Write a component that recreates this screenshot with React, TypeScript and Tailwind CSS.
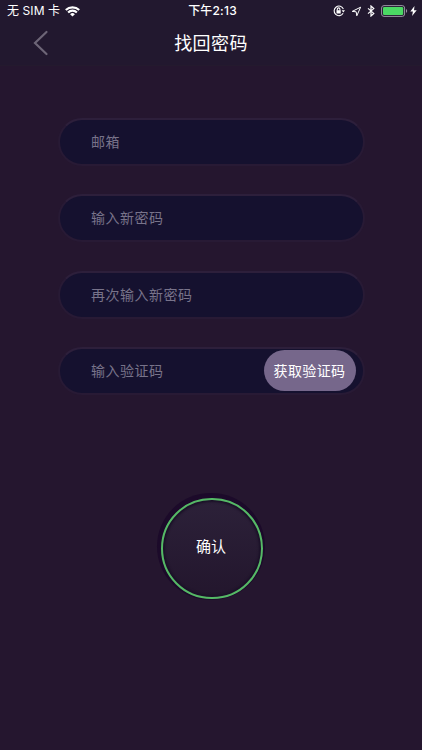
import React from "react";

const fields = ["邮箱", "输入新密码", "再次输入新密码", "输入验证码"];

function StatusBar() {
  return (
    <div className="grid h-[22px] grid-cols-[1fr_auto_1fr] items-center pl-[7px] pr-[5px] text-[12px] leading-[22px]">
      <div className="flex items-center gap-[5px]">
        <span className="whitespace-pre tracking-[0.1px]">无 SIM 卡</span>
        <svg width="15" height="11" viewBox="0 0 15 11" fill="none" stroke="white" strokeWidth="2.1">
          <path d="M.8 4.1a9.5 9.5 0 0 1 13.4 0M3.1 6.5a6.2 6.2 0 0 1 8.8 0" />
          <path d="M7.5 10.6 5.1 8.2a3.4 3.4 0 0 1 4.8 0Z" fill="white" stroke="none" />
        </svg>
      </div>
      <span className="pl-[1px] font-medium tracking-[0.2px]">下午2:13</span>
      <div className="flex items-center justify-end">
        <svg width="12" height="12" viewBox="0 0 12 12" fill="none" stroke="white" strokeWidth="1.1">
          <path d="M10.4 4.1A4.8 4.8 0 1 0 10.1 8.3" />
          <path d="m8.6 5.2 3.4 0-1.7 2.3Z" fill="white" stroke="none" />
          <rect x="3.5" y="5.2" width="4.2" height="3.3" fill="white" stroke="none" />
          <path d="M4.3 5.5V4.2a1.3 1.3 0 0 1 2.6 0v1.3" />
        </svg>
        <svg className="ml-[6px]" width="11" height="11" viewBox="0 0 11 11" fill="none" stroke="white" strokeWidth="1" strokeLinejoin="round">
          <path d="M9.6 1.2 1.2 5.4l4 .4.6 4Z" />
        </svg>
        <svg className="ml-[5px]" width="8" height="12" viewBox="0 0 8 12" fill="none" stroke="white" strokeWidth="1.2">
          <path d="m1 3.4 5.8 5L4 11V1l2.8 2.6L1 8.6" />
        </svg>
        <svg className="ml-[6px]" width="27" height="12" viewBox="0 0 27 12" fill="none">
          <rect x=".6" y=".6" width="23" height="10.8" rx="2.4" stroke="#9a94a3" />
          <rect x="2" y="2" width="20.2" height="8" rx="1.3" fill="#4bd964" />
          <path d="M25 4.1c1.6.6 1.6 3.2 0 3.8Z" fill="#9a94a3" />
        </svg>
        <svg className="ml-[2px]" width="7" height="10" viewBox="0 0 7 10" fill="white">
          <path d="M4.5 0 .3 5.6h2.6L2.1 10l4.6-5.8H4Z" />
        </svg>
      </div>
    </div>
  );
}

export default function App() {
  return (
    <main className="flex h-[750px] w-[422px] flex-col overflow-hidden bg-[#25162f] font-['Inter','Noto_Sans_CJK_SC',sans-serif] text-white">
      <header className="h-[66px] border-b border-[#241a2e] bg-[#22182f]">
        <StatusBar />
        <div className="grid h-[42px] grid-cols-[1fr_auto_1fr] items-center">
          <button aria-label="返回" className="ml-[33px] w-4">
            <svg width="16" height="26" viewBox="0 0 16 26" fill="none" stroke="#6d6577" strokeWidth="2.2" strokeLinecap="round">
              <path d="M13.5 2 2 13l11.5 11" />
            </svg>
          </button>
          <h1 className="pt-[2px] text-[18px] leading-6 tracking-[0.4px]">找回密码</h1>
        </div>
      </header>
      <form className="flex flex-col items-center">
        <div className="ml-px mt-[52px] flex w-[307px] flex-col gap-[28.3px]">
          {fields.map((label, i) => (
            <label
              key={label}
              className="flex h-12 items-center justify-between rounded-full border-2 border-[#281a35] border-t-[#2d1f3b] bg-[#15112f] pl-[31px] pr-[7.5px]"
            >
              <span className="text-[14px] leading-5 tracking-[0.5px] text-[#78738a]">{label}</span>
              {i === 3 && (
                <button type="button" className="h-[41px] w-[92px] rounded-full bg-[#76678b] text-[14px] tracking-[0.4px]">
                  获取验证码
                </button>
              )}
            </label>
          ))}
        </div>
        <button
          type="button"
          className="ml-[2px] mt-[103px] flex h-[101px] w-[102px] items-center justify-center rounded-full border-2 border-[#55b966] bg-linear-to-b from-[#2c2139] to-[#23162d] pb-[3px] pr-[2px] text-[15px] shadow-[-1px_-2px_0_3px_#1c0a2a,inset_0_0_2px_2px_#1b1128]"
        >
          确认
        </button>
      </form>
    </main>
  );
}
